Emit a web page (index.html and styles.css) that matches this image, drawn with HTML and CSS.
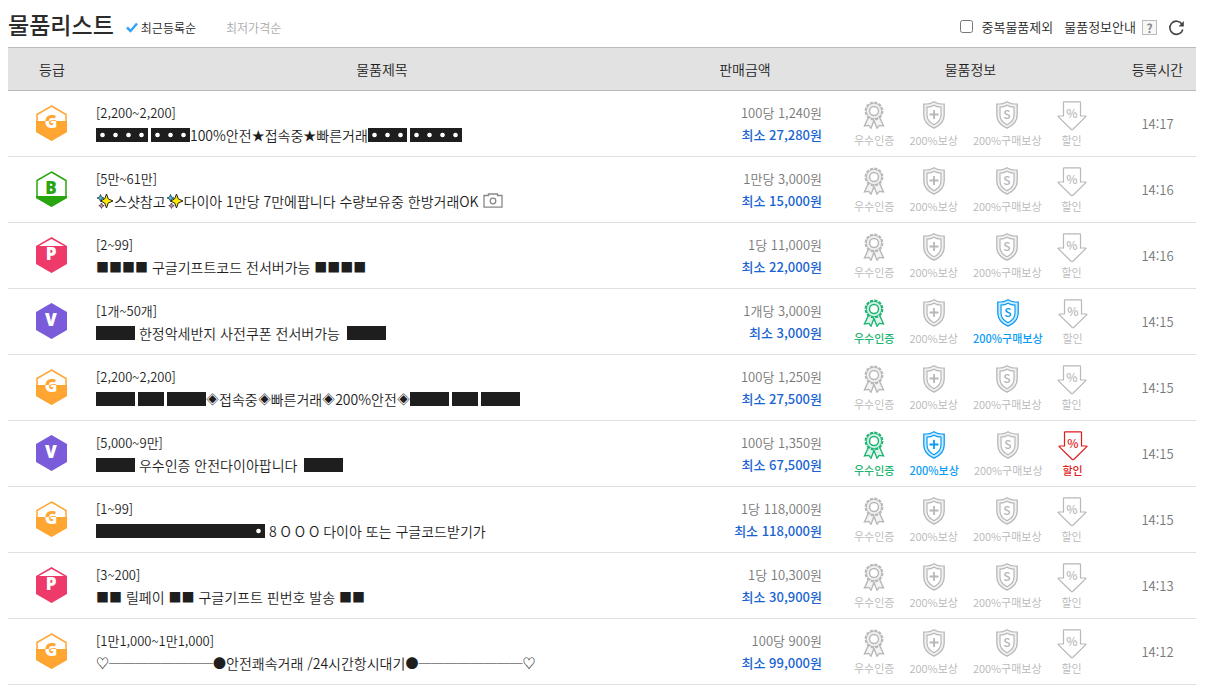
FILE: index.html
```html
<!DOCTYPE html>
<html lang="ko">
<head>
<meta charset="UTF-8">
<meta name="viewport" content="width=device-width, initial-scale=1.0">
<title>물품리스트</title>
<link rel="stylesheet" href="styles.css">
</head>
<body>

<!-- icons -->
<svg class="sprite" aria-hidden="true">
    <linearGradient id="g-split" gradientUnits="userSpaceOnUse" x1="0" y1="0" x2="0" y2="32">
        <stop offset=".5" stop-color="#ffa531"/>
        <stop offset=".5" stop-color="#fff"/>
    </linearGradient>
    <symbol id="grade-g" viewBox="0 0 31 36">
        <path d="M15.500 1 30 9.500V26.500L15.500 35 1 26.500V9.500Z" fill="#fff" stroke="#ffa531" stroke-width="1.500"/>
        <path d="M0 16h31v11L15.500 36 0 27Z" fill="#ffa531"/>
    </symbol>
    <symbol id="grade-b" viewBox="0 0 31 36">
        <path d="M15.500 1 30 9.500V26.500L15.500 35 1 26.500V9.500Z" fill="#fff" stroke="#29a60f" stroke-width="1.500"/>
        <path d="M0 25h31v2L15.500 36 0 27Z" fill="#29a60f"/>
    </symbol>
    <symbol id="grade-p" viewBox="0 0 31 36">
        <path d="M15.500 0 31 9v18l-15.500 9L0 27V9Z" fill="#ee3a6a"/>
        <path d="M15.500 2 28 9H3Z" fill="#fff"/>
    </symbol>
    <symbol id="grade-v" viewBox="0 0 31 36">
        <path d="M15.500 0 31 9v18l-15.500 9L0 27V9Z" fill="#7a5bd9"/>
    </symbol>
    <symbol id="ic-medal" viewBox="0 0 22 28">
        <path d="M6 15 1.500 25l4.300-.6 2.200 2.800 3-7.700 3 7.700 2.200-2.800 4.300.6L16 15" fill="currentColor" fill-opacity=".15" stroke="currentColor" stroke-width="1.400"/>
        <circle cx="11" cy="10" r="8.400" fill="#fff" stroke="currentColor" stroke-width="2" stroke-dasharray="3.200 1.200"/>
        <circle cx="11" cy="10" r="7.600" fill="currentColor" fill-opacity=".2" stroke="currentColor" stroke-width=".8"/>
        <circle cx="11" cy="10" r="4.500" fill="#fff" stroke="currentColor" stroke-width="1.500"/>
    </symbol>
    <symbol id="ic-shield" viewBox="0 0 22 28">
        <path d="M11 .8C8 2.800 4.500 3.200.8 3.200V14c0 6 4 10.500 10.200 13.200C17.200 24.500 21.200 20 21.200 14V3.200C17.500 3.200 14 2.800 11 .8Z" fill="currentColor" fill-opacity=".2" stroke="currentColor" stroke-width="1.300"/>
        <path d="M11 4.200C8.800 5.500 6.500 6 4 6.100V14c0 4.400 2.700 7.700 7 9.800 4.300-2.100 7-5.400 7-9.800V6.100C15.500 6 13.200 5.500 11 4.200Z" fill="#fff" stroke="currentColor" stroke-width="1.200"/>
    </symbol>
    <symbol id="ic-plus" viewBox="0 0 22 28">
        <use href="#ic-shield" width="22" height="28"/>
        <path d="M11 9v9M6.500 13.500h9" stroke="currentColor" stroke-width="1.800"/>
    </symbol>
    <symbol id="ic-sale" viewBox="0 0 30 30">
        <path d="M6.500 1.500Q6.500.8 7.200.8h15.600q.7 0 .7.700V15h5q.9 0 .3.700L15.700 28.500q-.7.500-1.400 0L1.200 15.700Q.6 15 1.500 15h5Z" fill="none" stroke="currentColor" stroke-width="1.200"/>
    </symbol>
    <symbol id="ic-sparkle" viewBox="0 0 17 16">
        <path d="M10 1l1.700 4.800L16.500 8l-4.800 2L10 15 8.200 10 4 8l4.200-2.200Z" fill="#ffeb00" stroke="#222" stroke-width="1"/>
        <path d="M4 1.500 5 4l2.500 1L5 6 4 8.500 3 6 .5 5 3 4Z" fill="#39c5e8" stroke="#222" stroke-width=".7"/>
        <path d="M5 10l.8 1.900 1.900.8-1.900.8L5 15.400l-.8-1.900-1.900-.8 1.900-.8Z" fill="#f58fb0" stroke="#222" stroke-width=".7"/>
    </symbol>
</svg>

<div class="list-top">
    <h1>물품리스트</h1>
    <nav class="sort">
        <a href="#" class="on"><svg width="12" height="11" viewBox="0 0 12 11"><path d="M1 5.500 4.500 9 11 1.500" fill="none" stroke="#35a4f7" stroke-width="2.500"/></svg>최근등록순</a>
        <a href="#">최저가격순</a>
    </nav>
    <div class="tools">
        <label class="dup"><input type="checkbox" id="dupCheck">중복물품제외</label>
        <a href="#" class="guide">물품정보안내<span class="help">?</span></a>
        <button type="button" class="refresh" aria-label="새로고침">
            <svg width="17" height="16" viewBox="0 0 17 16"><path d="M14 4.200A6.600 6.600 0 1 0 14.800 9.500" fill="none" stroke="#444" stroke-width="1.600"/><path d="M15.800 1v5.500H10.500Z" fill="#444"/></svg>
        </button>
    </div>
</div>

<table class="goods">
    <thead>
        <tr>
            <th class="c-grade">등급</th>
            <th>물품제목</th>
            <th class="c-price">판매금액</th>
            <th class="c-info">물품정보</th>
            <th class="c-time">등록시간</th>
        </tr>
    </thead>
    <tbody>
        <tr>
            <td class="grade g"><svg><use href="#grade-g"/><text x="15" y="23">G</text></svg></td>
            <td class="title"><p>[2,200~2,200]</p><a href="#"><i class="box dots" style="--n:4"></i><i class="box dots" style="--n:3"></i>100%안전<b>★</b>접속중<b>★</b>빠른거래<i class="box dots" style="--n:3"></i><i class="box dots" style="--n:4"></i></a></td>
            <td class="price"><p>100당 1,240원</p><strong>최소 27,280원</strong></td>
            <td><ul class="info">
                <li><svg><use href="#ic-medal"/></svg>우수인증</li>
                <li><svg><use href="#ic-plus"/></svg>200%보상</li>
                <li><svg><use href="#ic-shield"/><text x="11" y="18">S</text></svg>200%구매보상</li>
                <li class="sale"><svg><use href="#ic-sale"/><text x="15" y="17">%</text></svg>할인</li>
            </ul></td>
            <td class="time">14:17</td>
        </tr>
        <tr>
            <td class="grade b"><svg><use href="#grade-b"/><text x="15" y="23">B</text></svg></td>
            <td class="title"><p>[5만~61만]</p><a href="#"><svg class="sparkle"><use href="#ic-sparkle"/></svg>스샷참고<svg class="sparkle"><use href="#ic-sparkle"/></svg>다이아 1만당 7만에팝니다 수량보유중 한방거래OK <svg class="camera" viewBox="0 0 20 15"><path d="M1 2.500h4.500V1h9v1.500H19v11.700H1Z" fill="none" stroke="#888" stroke-width="1.300"/><circle cx="10" cy="8" r="2.800" fill="none" stroke="#888" stroke-width="1.300"/></svg></a></td>
            <td class="price"><p>1만당 3,000원</p><strong>최소 15,000원</strong></td>
            <td><ul class="info">
                <li><svg><use href="#ic-medal"/></svg>우수인증</li>
                <li><svg><use href="#ic-plus"/></svg>200%보상</li>
                <li><svg><use href="#ic-shield"/><text x="11" y="18">S</text></svg>200%구매보상</li>
                <li class="sale"><svg><use href="#ic-sale"/><text x="15" y="17">%</text></svg>할인</li>
            </ul></td>
            <td class="time">14:16</td>
        </tr>
        <tr>
            <td class="grade"><svg><use href="#grade-p"/><text x="15" y="23">P</text></svg></td>
            <td class="title"><p>[2~99]</p><a href="#"><b>■■■■</b> 구글기프트코드 전서버가능 <b>■■■■</b></a></td>
            <td class="price"><p>1당 11,000원</p><strong>최소 22,000원</strong></td>
            <td><ul class="info">
                <li><svg><use href="#ic-medal"/></svg>우수인증</li>
                <li><svg><use href="#ic-plus"/></svg>200%보상</li>
                <li><svg><use href="#ic-shield"/><text x="11" y="18">S</text></svg>200%구매보상</li>
                <li class="sale"><svg><use href="#ic-sale"/><text x="15" y="17">%</text></svg>할인</li>
            </ul></td>
            <td class="time">14:16</td>
        </tr>
        <tr>
            <td class="grade"><svg><use href="#grade-v"/><text x="15" y="23">V</text></svg></td>
            <td class="title"><p>[1개~50개]</p><a href="#"><i class="box" style="--n:3"></i> 한정악세반지 사전쿠폰 전서버가능 <i class="box" style="--n:3"></i></a></td>
            <td class="price"><p>1개당 3,000원</p><strong>최소 3,000원</strong></td>
            <td><ul class="info">
                <li class="green"><svg><use href="#ic-medal"/></svg>우수인증</li>
                <li><svg><use href="#ic-plus"/></svg>200%보상</li>
                <li class="blue"><svg><use href="#ic-shield"/><text x="11" y="18">S</text></svg>200%구매보상</li>
                <li class="sale"><svg><use href="#ic-sale"/><text x="15" y="17">%</text></svg>할인</li>
            </ul></td>
            <td class="time">14:15</td>
        </tr>
        <tr>
            <td class="grade g"><svg><use href="#grade-g"/><text x="15" y="23">G</text></svg></td>
            <td class="title"><p>[2,200~2,200]</p><a href="#"><i class="box" style="--n:3"></i><i class="box" style="--n:2"></i><i class="box" style="--n:3"></i><b>◈</b>접속중<b>◈</b>빠른거래<b>◈</b>200%안전<b>◈</b><i class="box" style="--n:3"></i><i class="box" style="--n:2"></i><i class="box" style="--n:3"></i></a></td>
            <td class="price"><p>100당 1,250원</p><strong>최소 27,500원</strong></td>
            <td><ul class="info">
                <li><svg><use href="#ic-medal"/></svg>우수인증</li>
                <li><svg><use href="#ic-plus"/></svg>200%보상</li>
                <li><svg><use href="#ic-shield"/><text x="11" y="18">S</text></svg>200%구매보상</li>
                <li class="sale"><svg><use href="#ic-sale"/><text x="15" y="17">%</text></svg>할인</li>
            </ul></td>
            <td class="time">14:15</td>
        </tr>
        <tr>
            <td class="grade"><svg><use href="#grade-v"/><text x="15" y="23">V</text></svg></td>
            <td class="title"><p>[5,000~9만]</p><a href="#"><i class="box" style="--n:3"></i> 우수인증 안전다이아팝니다 <i class="box" style="--n:3"></i></a></td>
            <td class="price"><p>100당 1,350원</p><strong>최소 67,500원</strong></td>
            <td><ul class="info">
                <li class="green"><svg><use href="#ic-medal"/></svg>우수인증</li>
                <li class="blue"><svg><use href="#ic-plus"/></svg>200%보상</li>
                <li><svg><use href="#ic-shield"/><text x="11" y="18">S</text></svg>200%구매보상</li>
                <li class="sale red"><svg><use href="#ic-sale"/><text x="15" y="17">%</text></svg>할인</li>
            </ul></td>
            <td class="time">14:15</td>
        </tr>
        <tr>
            <td class="grade g"><svg><use href="#grade-g"/><text x="15" y="23">G</text></svg></td>
            <td class="title"><p>[1~99]</p><a href="#"><i class="box dots dot-end" style="--n:13"></i> 8 O O O 다이아 또는 구글코드받기가</a></td>
            <td class="price"><p>1당 118,000원</p><strong>최소 118,000원</strong></td>
            <td><ul class="info">
                <li><svg><use href="#ic-medal"/></svg>우수인증</li>
                <li><svg><use href="#ic-plus"/></svg>200%보상</li>
                <li><svg><use href="#ic-shield"/><text x="11" y="18">S</text></svg>200%구매보상</li>
                <li class="sale"><svg><use href="#ic-sale"/><text x="15" y="17">%</text></svg>할인</li>
            </ul></td>
            <td class="time">14:15</td>
        </tr>
        <tr>
            <td class="grade"><svg><use href="#grade-p"/><text x="15" y="23">P</text></svg></td>
            <td class="title"><p>[3~200]</p><a href="#"><b>■■</b> 릴페이 <b>■■</b> 구글기프트 핀번호 발송 <b>■■</b></a></td>
            <td class="price"><p>1당 10,300원</p><strong>최소 30,900원</strong></td>
            <td><ul class="info">
                <li><svg><use href="#ic-medal"/></svg>우수인증</li>
                <li><svg><use href="#ic-plus"/></svg>200%보상</li>
                <li><svg><use href="#ic-shield"/><text x="11" y="18">S</text></svg>200%구매보상</li>
                <li class="sale"><svg><use href="#ic-sale"/><text x="15" y="17">%</text></svg>할인</li>
            </ul></td>
            <td class="time">14:13</td>
        </tr>
        <tr>
            <td class="grade g"><svg><use href="#grade-g"/><text x="15" y="23">G</text></svg></td>
            <td class="title"><p>[1만1,000~1만1,000]</p><a href="#"><b class="line">♡────────●</b>안전쾌속거래 /24시간항시대기<b class="line">●────────♡</b></a></td>
            <td class="price"><p>100당 900원</p><strong>최소 99,000원</strong></td>
            <td><ul class="info">
                <li><svg><use href="#ic-medal"/></svg>우수인증</li>
                <li><svg><use href="#ic-plus"/></svg>200%보상</li>
                <li><svg><use href="#ic-shield"/><text x="11" y="18">S</text></svg>200%구매보상</li>
                <li class="sale"><svg><use href="#ic-sale"/><text x="15" y="17">%</text></svg>할인</li>
            </ul></td>
            <td class="time">14:12</td>
        </tr>
    </tbody>
</table>

</body>
</html>
```
FILE: styles.css
```css
* {
    box-sizing: border-box;
}
body {
    margin: 0;
    padding: 3px 10px 8px 8px;
    background: #fff;
    color: #1e1e1e;
    font-family: "Noto Sans CJK KR", sans-serif;
    font-size: 14px;
    font-weight: 350;
}
a {
    color: inherit;
    text-decoration: none;
}
p, ul, h1 {
    margin: 0;
    padding: 0;
}
.sprite {
    position: absolute;
    width: 0;
    height: 0;
}

/* top */
.list-top {
    display: flex;
    align-items: center;
    height: 44px;
}
h1 {
    font-size: 23px;
    font-weight: 500;
    line-height: 30px;
    padding-bottom: 2px;
    color: #2b2b2b;
}
.sort {
    display: flex;
    gap: 30px;
    margin-left: 12px;
    padding-top: 4px;
    font-size: 12px;
    color: #aaa;
}
.sort a {
    display: flex;
    align-items: center;
    gap: 3px;
}
.sort .on {
    color: #1e1e1e;
}
.tools {
    display: flex;
    align-items: center;
    gap: 11px;
    margin-left: auto;
    padding: 2px 11px 0 0;
    font-size: 13px;
}
.tools label,
.guide {
    display: flex;
    align-items: center;
}
.tools input {
    width: 13px;
    height: 13px;
    margin: 0 8px 0 0;
}
.help {
    width: 15px;
    height: 15px;
    margin: 3px 0 0 6px;
    border: 1px solid #bbb;
    background: #f7f7f7;
    color: #888;
    font-size: 12px;
    font-weight: 700;
    line-height: 13px;
    text-align: center;
}
.refresh {
    display: flex;
    padding: 4px 0 0;
    border: 0;
    background: none;
    cursor: pointer;
}

/* list */
.goods {
    width: 100%;
    table-layout: fixed;
    border-collapse: separate;
    border-spacing: 0;
}
.goods th {
    height: 44px;
    padding: 0;
    background: #e2e2e2;
    border-top: 1px solid #bbb;
    border-bottom: 1px solid #bbb;
    font-weight: 350;
}
.c-grade {
    width: 88px;
}
.c-price {
    width: 154px;
}
.c-info {
    width: 297px;
}
.c-time {
    width: 77px;
}
.goods td {
    height: 66px;
    padding: 0;
    border-bottom: 1px solid #e0e0e0;
    line-height: 22px;
}
.goods .grade {
    padding: 0 1px 2px 0;
}
.grade svg {
    display: block;
    width: 31px;
    height: 36px;
    margin: 0 auto;
}
.grade text {
    font-family: "Open Sans", sans-serif;
    font-size: 17px;
    font-weight: 800;
    text-anchor: middle;
    fill: #fff;
}
.g text {
    fill: url(#g-split);
}
.b text {
    fill: #29a60f;
}
.title {
    white-space: nowrap;
}
.title p {
    font-size: 13px;
}
.title a {
    display: flex;
    align-items: center;
    height: 22px;
    white-space: pre;
}
.title b {
    font-size: 13px;
    font-weight: 400;
}
.title .line {
    font-weight: 700;
}
.box {
    width: calc(var(--n) * 13px);
    height: 14px;
    background-color: #1e1e1e;
}
.box + .box {
    margin-left: 3px;
}
.dots {
    background-image: radial-gradient(circle 3px, #fff 60%, transparent 90%);
    background-size: 13px 14px;
}
.dot-end {
    background-position: right;
    background-repeat: no-repeat;
}
.sparkle {
    width: 18px;
    height: 16px;
}
.camera {
    width: 20px;
    height: 15px;
}
.price {
    text-align: right;
    font-size: 13px;
    color: #777;
}
.price strong {
    display: block;
    font-weight: 500;
    color: #1a64d2;
}
.info {
    display: flex;
    gap: 15px;
    padding: 2px 0 0 32px;
    list-style: none;
    font-size: 11px;
    line-height: 18px;
    color: #b8b8b8;
}
.info li {
    display: flex;
    flex-direction: column;
    align-items: center;
}
.info svg {
    width: 22px;
    height: 28px;
    margin-bottom: 2px;
}
.info .sale svg {
    width: 30px;
    height: 30px;
    margin-bottom: 0;
}
.info text {
    font-size: 12px;
    font-weight: 500;
    text-anchor: middle;
    fill: currentColor;
}
.info .green,
.info .blue,
.info .red {
    font-weight: 500;
}
.info .green {
    color: #1fb573;
}
.info .blue {
    color: #0a9cf5;
}
.info .red {
    color: #e01b1b;
}
.time {
    text-align: center;
    font-size: 13px;
    color: #777;
}
```
